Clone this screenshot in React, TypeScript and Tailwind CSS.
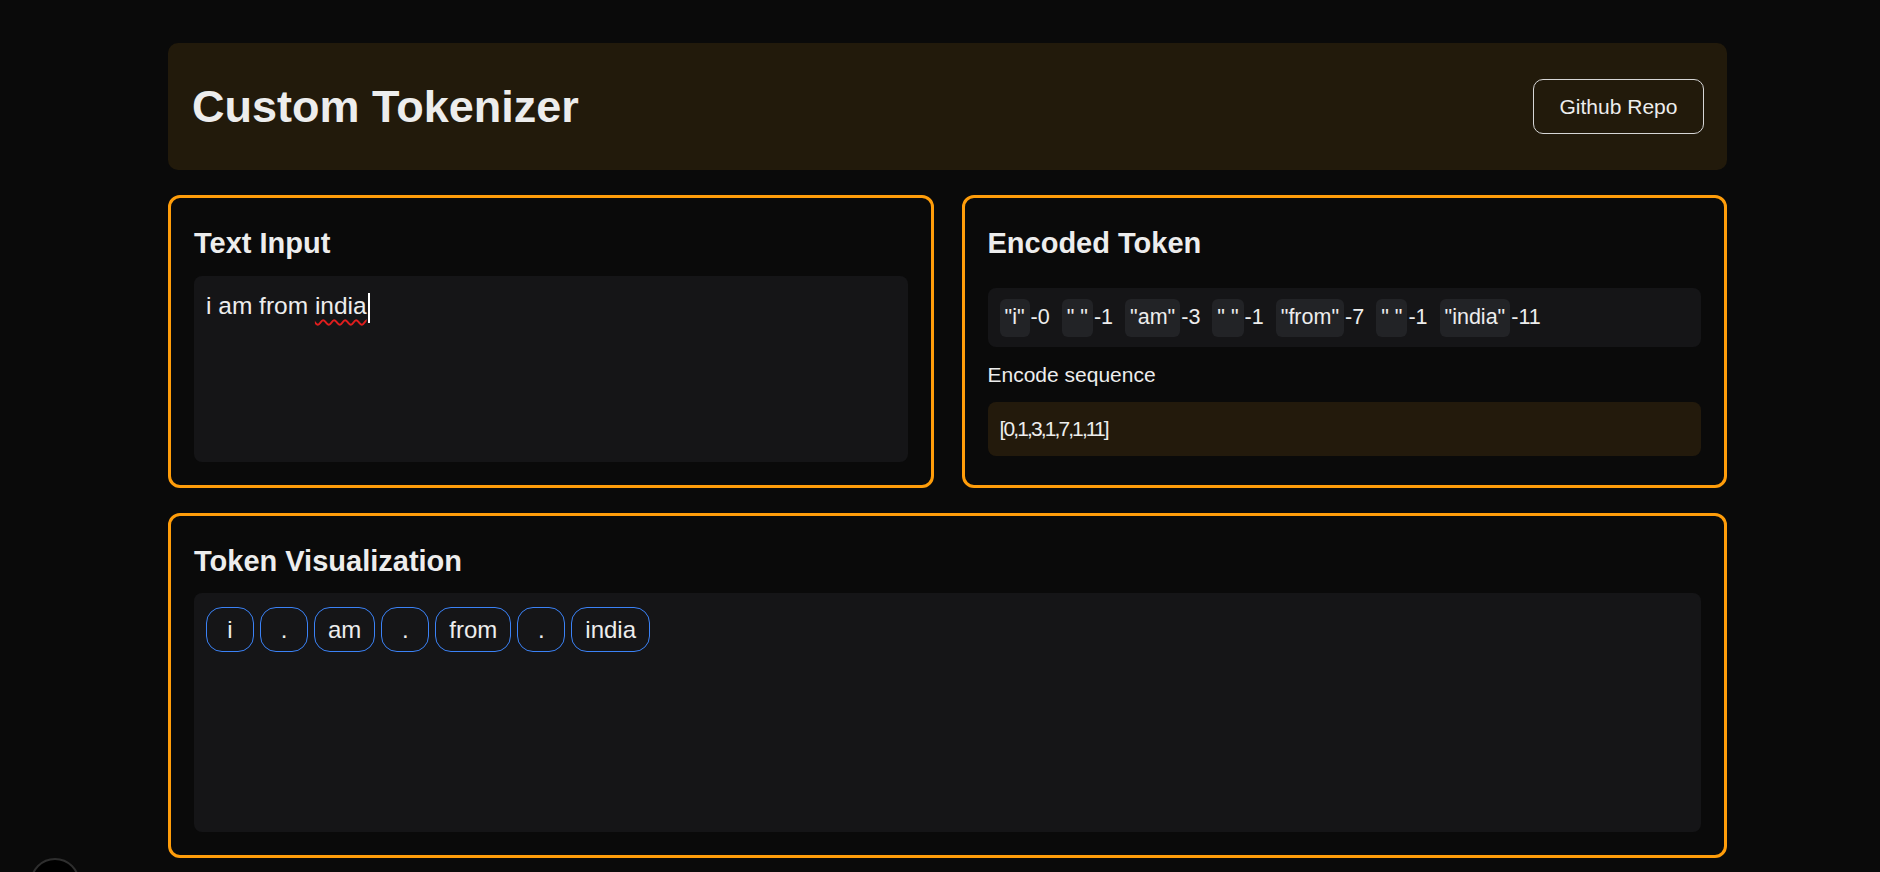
import React from "react"

const encoded = [
	{ text: '"i"', id: 0 },
	{ text: '" "', id: 1 },
	{ text: '"am"', id: 3 },
	{ text: '" "', id: 1 },
	{ text: '"from"', id: 7 },
	{ text: '" "', id: 1 },
	{ text: '"india"', id: 11 },
]

const visualTokens = ["i", ".", "am", ".", "from", ".", "india"]

const Card = ({ title, children, titleGap }: { title: string; children: React.ReactNode; titleGap: string }) => {
	return (
		<div className="rounded-xl border-[3px] border-[#ff9d0a] bg-[#0a0a0a] p-[23px]">
			<h2 className={`text-[29px] font-bold leading-[44px] text-[#ededed] ${titleGap}`}>{title}</h2>
			{children}
		</div>
	)
}

const App = () => {
	return (
		<div className="min-h-screen bg-[#0a0a0a] font-['Liberation_Sans',Arial,sans-serif] text-[#ededed]">
			<div className="pl-[168px] pt-[43px] pb-10">
				<div className="flex w-[1559px] flex-col gap-[25px]">
					{/* HEADER */}
					<div className="flex h-[127px] items-center justify-between rounded-[10px] bg-[#221a0b] pl-6 pr-[23px]">
						<h1 className="text-[45px] font-bold text-[#ededed]">Custom Tokenizer</h1>
						<button className="flex h-[55px] w-[171px] items-center justify-center rounded-[10px] border border-[#d6d6d6] text-[21px] text-[#ededed]">
							Github Repo
						</button>
					</div>

					{/* INPUT + ENCODED */}
					<div className="grid grid-cols-2 gap-[28px]">
						<Card title="Text Input" titleGap="mb-[11px]">
							<div className="h-[186px] rounded-lg bg-[#151517] px-3 pt-[14px] text-[24.5px] leading-8">
								i am from{" "}
								<span className="underline decoration-[#e11d1d] decoration-wavy decoration-[1.5px] underline-offset-[5px]">india</span>
								<span className="ml-px inline-block h-[30px] w-[2px] bg-white align-middle" />
							</div>
						</Card>
						<Card title="Encoded Token" titleGap="mb-[23px]">
							<div className="flex h-[59px] items-center gap-3 rounded-lg bg-[#151517] px-3 text-[21.5px]">
								{encoded.map((token, i) => (
									<div key={i} className="flex items-center">
										<span className="flex h-[38px] items-center rounded-md bg-[#222326] px-[5px] leading-none">{token.text}</span>
										<span className="ml-px">-{token.id}</span>
									</div>
								))}
							</div>
							<p className="mt-[14px] mb-[13px] text-[21px] leading-7">Encode sequence</p>
							<div className="flex h-[54px] items-center rounded-lg bg-[#231a0c] px-3 text-[21px] tracking-[-0.09em]">
								[0,1,3,1,7,1,11]
							</div>
						</Card>
					</div>

					{/* VISUALIZATION */}
					<Card title="Token Visualization" titleGap="mb-[10px]">
						<div className="flex h-[239px] flex-wrap content-start items-start gap-1.5 rounded-lg bg-[#151517] px-3 pt-[14px]">
							{visualTokens.map((t, i) => (
								<span
									key={i}
									className="flex h-[45px] min-w-12 items-center justify-center rounded-2xl border border-[#3b82f6] px-[13px] text-[24px]"
								>
									{t}
								</span>
							))}
						</div>
					</Card>
				</div>
			</div>
			<div className="fixed left-[30px] top-[858px] h-[50px] w-[50px] rounded-full border-2 border-[#2e2e2e] bg-black" />
		</div>
	)
}

export default App
